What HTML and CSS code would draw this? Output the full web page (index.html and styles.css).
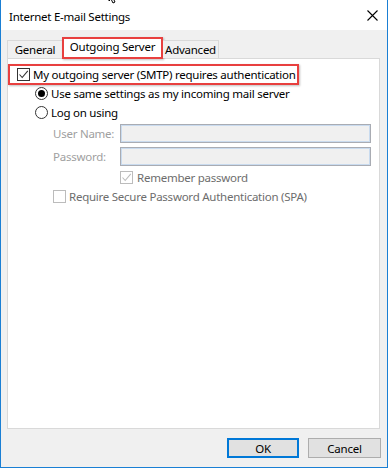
FILE: index.html
```html
<!DOCTYPE html>
<html lang="en">
<head>
    <meta charset="UTF-8">
    <title>Internet E-mail Settings</title>
    <link rel="stylesheet" href="styles.css">
</head>
<body>
    <div class="window">
        <svg class="cursor" width="12" height="6" viewBox="0 0 12 6">
            <path d="M1 -6 L1 1 L3 -1 L5 3 L7 2 L5 -2 L8 -2 Z" fill="#fff" stroke="#000" stroke-width="1"/>
        </svg>

        <div class="titlebar">
            <span class="title">Internet E-mail Settings</span>
            <svg class="close" width="11" height="11" viewBox="0 0 11 11">
                <path d="M0.5 0.5 L10.5 10.5 M10.5 0.5 L0.5 10.5" stroke="#000" stroke-width="1.1" fill="none"/>
            </svg>
        </div>

        <div class="client">
            <div class="tabs">
                <div class="tab tab-general">General</div>
                <div class="tab tab-active">Outgoing Server</div>
                <div class="tab tab-advanced">Advanced</div>
            </div>

            <div class="panel">
                <div class="auth-row">
                    <span class="check">
                        <svg width="11" height="11" viewBox="0 0 11 11">
                            <path d="M1.5 5.5 L4.2 8.5 L9.8 1.8" stroke="#333" stroke-width="1.1" fill="none"/>
                        </svg>
                    </span>
                    <span>My outgoing server (SMTP) requires authentication</span>
                </div>

                <div class="option option-same">
                    <span class="radio radio-on"></span>
                    <span>Use same settings as my incoming mail server</span>
                </div>
                <div class="option option-logon">
                    <span class="radio"></span>
                    <span>Log on using</span>
                </div>

                <div class="fields">
                    <label class="field-label">User Name:</label>
                    <div class="field-input"></div>
                    <label class="field-label">Password:</label>
                    <div class="field-input"></div>
                </div>

                <div class="sub-option remember">
                    <span class="check check-disabled">
                        <svg width="11" height="11" viewBox="0 0 11 11">
                            <path d="M1.5 5.5 L4.2 8.5 L9.8 1.8" stroke="#bcbcbc" stroke-width="1.1" fill="none"/>
                        </svg>
                    </span>
                    <span>Remember password</span>
                </div>
                <div class="sub-option spa">
                    <span class="check check-disabled"></span>
                    <span>Require Secure Password Authentication (SPA)</span>
                </div>
            </div>

            <div class="footer">
                <button class="btn btn-default">OK</button>
                <button class="btn">Cancel</button>
            </div>
        </div>
    </div>
</body>
</html>
```

FILE: styles.css
```css
body {
    margin: 0;
    background: #ffffff;
    font-family: "Noto Sans", "Open Sans", sans-serif;
    font-size: 11.5px;
    letter-spacing: -0.25px;
    color: #000000;
}

.window {
    position: relative;
    width: 388px;
    height: 468px;
    box-sizing: border-box;
    border: 1px solid #1a7fd4;
    border-top: none;
    display: flex;
    flex-direction: column;
    overflow: hidden;
    white-space: nowrap;
}

.cursor {
    position: absolute;
    left: 107px;
    top: 0;
}

.titlebar {
    height: 30px;
    flex: none;
    background: #ffffff;
    display: flex;
    align-items: center;
    justify-content: space-between;
    padding: 0 9px 0 8px;
}

.title {
    padding-top: 2px;
}

.close {
    margin-top: 1px;
}

.client {
    flex: 1;
    background: #f0f0f0;
    display: flex;
    flex-direction: column;
    padding: 7px 7px 0 6px;
}

.tabs {
    position: relative;
    z-index: 1;
    display: flex;
    align-items: flex-end;
    height: 22px;
}

.tab {
    height: 18px;
    box-sizing: border-box;
    border: 1px solid #d9d9d9;
    border-bottom: none;
    background: #f0f0f0;
    display: flex;
    align-items: center;
    justify-content: center;
    margin-bottom: 1px;
}

.tab-general {
    width: 55px;
    border-right: none;
}

.tab-advanced {
    width: 56px;
    border-left: none;
}

.tab-active {
    width: 101px;
    height: 22px;
    margin-bottom: 0;
    background: #ffffff;
    border: 2px solid #e8403f;
    box-shadow: 1px 1px 2px rgba(0, 0, 0, 0.25);
    padding: 0 0 3px;
}

.panel {
    flex: 1;
    margin-top: -1px;
    background: #ffffff;
    border: 1px solid #d9d9d9;
    padding-top: 5px;
}

.auth-row {
    display: flex;
    align-items: center;
    box-sizing: border-box;
    height: 21px;
    width: 291px;
    border: 2px solid #e8403f;
    box-shadow: 1px 1px 2px rgba(0, 0, 0, 0.25);
    padding-left: 7px;
    gap: 3px;
}

.check {
    width: 13px;
    height: 13px;
    box-sizing: border-box;
    border: 1px solid #333333;
    background: #ffffff;
    display: flex;
    align-items: center;
    justify-content: center;
    flex: none;
}

.check-disabled {
    border-color: #bcbcbc;
}

.option {
    display: flex;
    align-items: center;
    gap: 3px;
    padding-left: 27px;
}

.option-same {
    height: 17px;
}

.option-logon {
    height: 21px;
}

.radio {
    width: 13px;
    height: 13px;
    box-sizing: border-box;
    border: 1px solid #333333;
    border-radius: 50%;
    background: #ffffff;
    display: flex;
    align-items: center;
    justify-content: center;
    flex: none;
}

.radio-on::after {
    content: "";
    width: 7px;
    height: 7px;
    border-radius: 50%;
    background: #000000;
}

.fields {
    display: grid;
    grid-template-columns: 67px 251px;
    row-gap: 4px;
    padding: 1px 0 0 45px;
    align-items: center;
}

.field-label {
    color: #a0a0a0;
}

.field-input {
    height: 19px;
    box-sizing: border-box;
    border: 1px solid #a9acb3;
    box-shadow: inset 0 0 0 1px #c9dbef;
    background: #f0f0f0;
}

.sub-option {
    display: flex;
    align-items: center;
    gap: 4px;
    color: #6d6d6d;
}

.remember {
    height: 20px;
    padding: 1px 0 0 112px;
}

.spa {
    height: 19px;
    padding-left: 45px;
    gap: 3px;
}

.footer {
    flex: none;
    display: flex;
    justify-content: flex-end;
    gap: 9px;
    padding: 9px 0 9px;
    margin-right: -1px;
}

.btn {
    font-family: inherit;
    font-size: 11.5px;
    letter-spacing: -0.25px;
    color: #000000;
    height: 20px;
    width: 73px;
    box-sizing: border-box;
    background: #e1e1e1;
    border: 1px solid #adadad;
    padding: 0;
}

.btn-default {
    width: 72px;
    border: 2px solid #0078d7;
}
```
